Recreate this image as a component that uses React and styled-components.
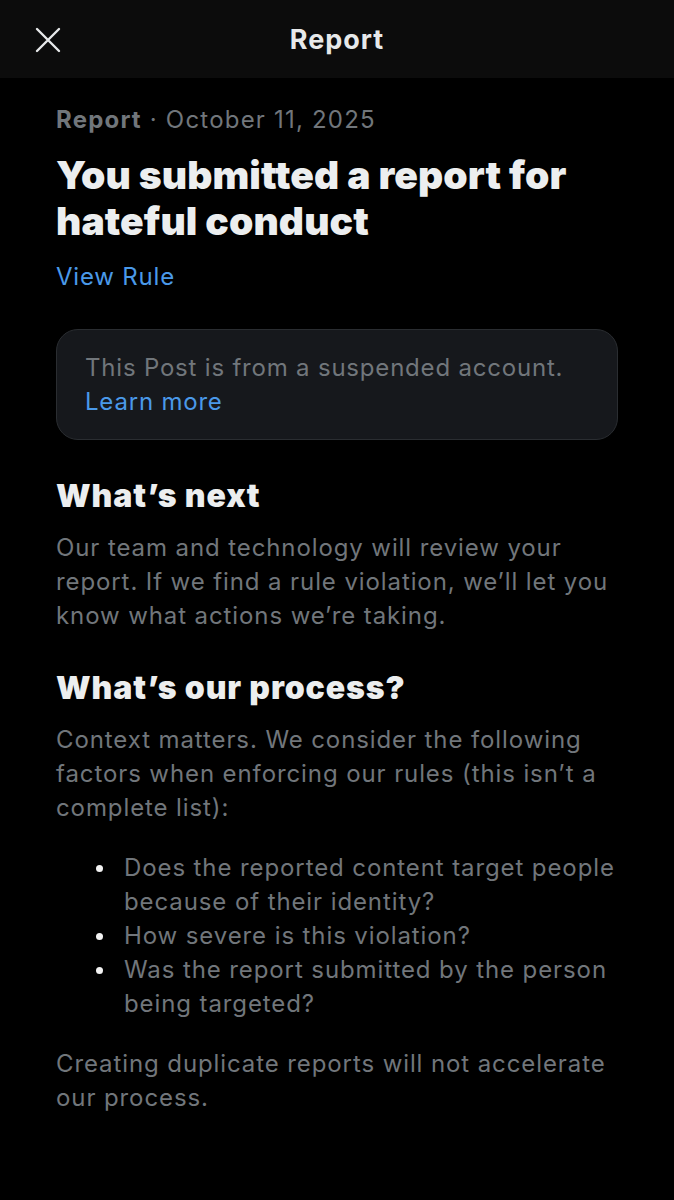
import React from "react";
import styled, { createGlobalStyle } from "styled-components";

const GlobalStyle = createGlobalStyle`
  html, body {
    margin: 0;
    padding: 0;
    background: #000;
  }
  body {
    font-family: Inter, "Noto Sans", "Liberation Sans", sans-serif;
    -webkit-font-smoothing: antialiased;
  }
`;

// Header

const HeaderWrap = styled.div`
  position: relative;
  display: flex;
  align-items: center;
  justify-content: center;
  height: 78px;
  background: #0c0c0c;
`;

const CloseBtn = styled.button`
  position: absolute;
  left: 30px;
  top: 22px;
  width: 36px;
  height: 36px;
  display: flex;
  align-items: center;
  justify-content: center;
  padding: 0;
  background: none;
  border: none;
  cursor: pointer;
`;

const HeaderTitle = styled.div`
  color: #e7e9ea;
  font-size: 27px;
  font-weight: 700;
  letter-spacing: 1px;
`;

// Content

const Content = styled.div`
  padding: 27px 56px 60px 56px;
`;

const Meta = styled.div`
  font-size: 24px;
  line-height: 30px;
  color: #71767b;
  letter-spacing: 1.2px;
`;

const MetaStrong = styled.span`
  font-weight: 700;
`;

const Title = styled.h1`
  margin: 17px 0 0;
  font-size: 39px;
  line-height: 46px;
  font-weight: 900;
  color: #eceeef;
  letter-spacing: 0.1px;
`;

const BlueLink = styled.a`
  display: ${({ $block }) => ($block ? "block" : "inline")};
  color: #4a99e9;
  text-decoration: none;
  cursor: pointer;
`;

const RuleLink = styled.div`
  margin-top: 18px;
  font-size: 24px;
  line-height: 30px;
  letter-spacing: 0.8px;
`;

const Notice = styled.div`
  margin-top: 37px;
  padding: 21px 28px 20px;
  background: #16181c;
  border: 1px solid #2a2d31;
  border-radius: 22px;
  font-size: 24px;
  line-height: 34px;
  color: #71767b;
  letter-spacing: 0.8px;
`;

const SectionTitle = styled.h2`
  margin: ${({ $top }) => $top}px 0 0;
  font-size: 32px;
  line-height: 40px;
  font-weight: 900;
  color: #eceeef;
  letter-spacing: 0.9px;
`;

const Para = styled.p`
  margin: ${({ $top }) => $top}px 0 0;
  font-size: 24px;
  line-height: 34px;
  color: #71767b;
  letter-spacing: 0.9px;
`;

const List = styled.ul`
  list-style: none;
  margin: 26px 0 0;
  padding: 0 0 0 40px;
  font-size: 24px;
  line-height: 34px;
  color: #71767b;
  letter-spacing: 0.9px;
`;

const Item = styled.li`
  display: flex;
  align-items: flex-start;
`;

const Dot = styled.span`
  flex: none;
  width: 7px;
  height: 7px;
  margin: 14px 21px 0 0;
  border-radius: 50%;
  background: #f2f2f2;
`;

const CloseIcon = () => (
  <svg width="30" height="30" viewBox="0 0 30 30" fill="none">
    <path
      d="M4 4 L26 26 M26 4 L4 26"
      stroke="#e7e9ea"
      strokeWidth="2.4"
      strokeLinecap="round"
    />
  </svg>
);

const factors = [
  "Does the reported content target people because of their identity?",
  "How severe is this violation?",
  "Was the report submitted by the person being targeted?",
];

export default function App() {
  return (
    <>
      <GlobalStyle />
      <HeaderWrap>
        <CloseBtn aria-label="Close">
          <CloseIcon />
        </CloseBtn>
        <HeaderTitle>Report</HeaderTitle>
      </HeaderWrap>
      <Content>
        <Meta>
          <MetaStrong>Report</MetaStrong> · October 11, 2025
        </Meta>
        <Title>You submitted a report for hateful conduct</Title>
        <RuleLink>
          <BlueLink>View Rule</BlueLink>
        </RuleLink>
        <Notice>
          This Post is from a suspended account.
          <BlueLink $block>Learn more</BlueLink>
        </Notice>
        <SectionTitle $top={36}>What’s next</SectionTitle>
        <Para $top={15}>
          Our team and technology will review your report. If we find a rule
          violation, we’ll let you know what actions we’re taking.
        </Para>
        <SectionTitle $top={35}>What’s our process?</SectionTitle>
        <Para $top={15}>
          Context matters. We consider the following factors when enforcing our
          rules (this isn’t a complete list):
        </Para>
        <List>
          {factors.map((f) => (
            <Item key={f}>
              <Dot />
              <span>{f}</span>
            </Item>
          ))}
        </List>
        <Para $top={26}>
          Creating duplicate reports will not accelerate our process.
        </Para>
      </Content>
    </>
  );
}
